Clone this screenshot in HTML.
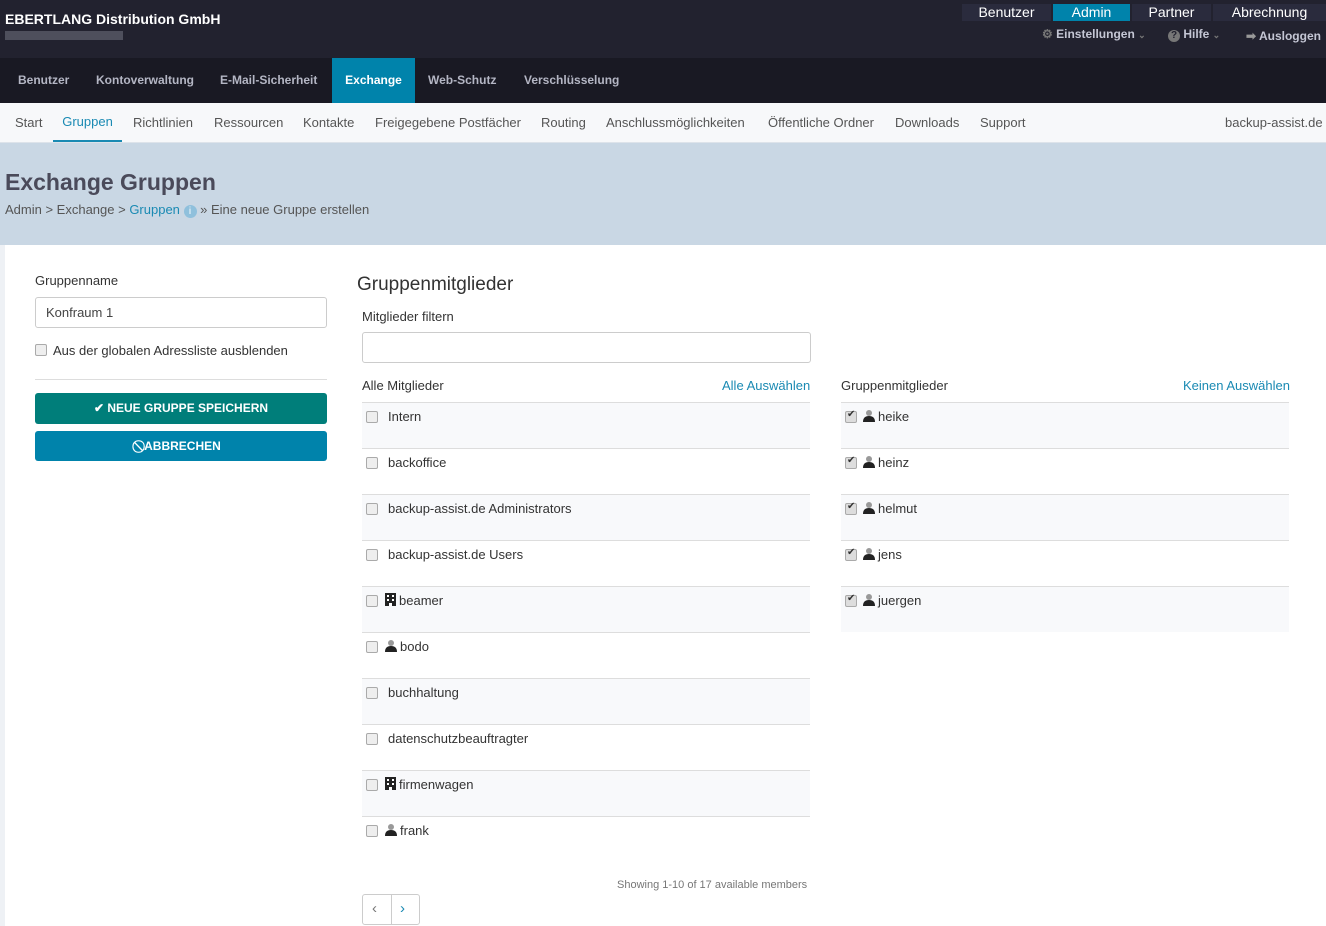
<!DOCTYPE html><html><head><meta charset="utf-8"><style>
*{box-sizing:border-box;margin:0;padding:0}
body{width:1326px;height:926px;overflow:hidden;font-family:"Liberation Sans",sans-serif;font-size:13px;color:#333;background:#eef1f5;position:relative}
.abs{position:absolute}
#top{left:0;top:0;width:1326px;height:58px;background:#22222f}
#nav{left:0;top:58px;width:1326px;height:45px;background:#191923}
#nav span{position:absolute;top:0;height:45px;line-height:45px;color:#b4b6c4;font-weight:bold;font-size:12px}
#sub{left:0;top:103px;width:1326px;height:40px;background:#f7f8fa;border-bottom:1px solid #dde3ea}
#sub span{position:absolute;top:0;line-height:40px;color:#555;font-size:13px}
#ban{left:0;top:143px;width:1326px;height:102px;background:#c9d7e4}
#card{left:5px;top:245px;width:1321px;height:681px;background:#fff}
.tb{position:absolute;top:4px;height:17px;background:#2a2b3d;color:#fff;font-size:14px;text-align:center;line-height:17px}
.cb{position:absolute;width:12px;height:12px;border:1px solid #aaa;border-radius:2px;background:#eee}
.row{position:absolute;height:46px;border-top:1px solid #ddd}
.row.g{background:#f8f9fb}
.row .cb{left:4px;top:8px}
.row .t{position:absolute;top:6px;left:26px;font-size:13px;color:#333}
.ic{display:inline-block;vertical-align:-1px;margin-right:3px}
.chk .cb::after{content:"✔";position:absolute;left:1px;top:-3px;font-size:10px;color:#333}
</style></head><body>
<div id="top" class="abs">
 <div class="abs" style="left:5px;top:11px;color:#fff;font-weight:bold;font-size:14px">EBERTLANG Distribution GmbH</div>
 <div class="abs" style="left:5px;top:31px;width:118px;height:9px;background:#5a5b68;opacity:.8"></div>
 <div class="tb" style="left:962px;width:89px">Benutzer</div>
 <div class="tb" style="left:1053px;width:77px;background:#0083ab">Admin</div>
 <div class="tb" style="left:1132px;width:79px">Partner</div>
 <div class="tb" style="left:1213px;width:113px">Abrechnung</div>
 <div class="abs" style="left:1042px;top:27px;color:#c4c6d4;font-weight:bold;font-size:12px;white-space:nowrap"><span style="color:#777">⚙</span> Einstellungen <span style="color:#777;font-size:9px">⌄</span></div>
 <div class="abs" style="left:1168px;top:27px;color:#c4c6d4;font-weight:bold;font-size:12px;white-space:nowrap"><span style="display:inline-block;width:12px;height:12px;border-radius:6px;background:#777;color:#22222f;font-size:10px;text-align:center;line-height:12px">?</span> Hilfe <span style="color:#777;font-size:9px">⌄</span></div>
 <div class="abs" style="left:1246px;top:29px;color:#c4c6d4;font-weight:bold;font-size:12px;white-space:nowrap"><span style="color:#999">➡</span> Ausloggen</div>
</div>
<div id="nav" class="abs">
 <span style="left:18px">Benutzer</span><span style="left:96px">Kontoverwaltung</span><span style="left:220px">E-Mail-Sicherheit</span>
 <span style="left:332px;width:83px;background:#0083ab;color:#fff;text-align:center">Exchange</span>
 <span style="left:428px">Web-Schutz</span><span style="left:524px">Verschlüsselung</span>
</div>
<div id="sub" class="abs">
 <span style="left:15px">Start</span><span style="left:53px;width:69px;text-align:center;color:#1a8ab3;border-bottom:2px solid #1a8ab3;height:39px;line-height:38px">Gruppen</span>
 <span style="left:133px">Richtlinien</span><span style="left:214px">Ressourcen</span><span style="left:303px">Kontakte</span><span style="left:375px">Freigegebene Postfächer</span><span style="left:541px">Routing</span><span style="left:606px">Anschlussmöglichkeiten</span><span style="left:768px">Öffentliche Ordner</span><span style="left:895px">Downloads</span><span style="left:980px">Support</span><span style="left:1225px">backup-assist.de</span>
</div>
<div id="ban" class="abs">
 <div class="abs" style="left:5px;top:26px;font-size:23px;font-weight:bold;color:#4a4a5a">Exchange Gruppen</div>
 <div class="abs" style="left:5px;top:59px;font-size:13px;color:#555;white-space:nowrap">Admin &gt; Exchange &gt; <span style="color:#1a8ab3">Gruppen</span> <span style="display:inline-block;width:13px;height:13px;border-radius:7px;background:#8fc0dc;color:#fff;font-size:10px;text-align:center;line-height:13px">i</span> » Eine neue Gruppe erstellen</div>
</div>
<div id="card" class="abs">
 <div class="abs" style="left:30px;top:28px;font-size:13px">Gruppenname</div>
 <div class="abs" style="left:30px;top:52px;width:292px;height:31px;border:1px solid #ccc;border-radius:3px;padding:7px 10px;font-size:13px;color:#444">Konfraum 1</div>
 <div class="cb" style="left:30px;top:99px"></div>
 <div class="abs" style="left:48px;top:98px;font-size:13px">Aus der globalen Adressliste ausblenden</div>
 <div class="abs" style="left:30px;top:134px;width:292px;border-top:1px solid #ddd"></div>
 <div class="abs" style="left:30px;top:148px;width:292px;height:31px;background:#007e7a;border-radius:3px;color:#fff;font-weight:bold;font-size:12px;text-align:center;line-height:31px">✔ NEUE GRUPPE SPEICHERN</div>
 <div class="abs" style="left:30px;top:186px;width:292px;height:30px;background:#0083ab;border-radius:3px;color:#fff;font-weight:bold;font-size:12px;text-align:center;line-height:30px">⃠ ABBRECHEN</div>
 <div class="abs" style="left:352px;top:29px;font-size:19px;color:#333">Gruppenmitglieder</div>
 <div class="abs" style="left:357px;top:64px;font-size:13px">Mitglieder filtern</div>
 <div class="abs" style="left:357px;top:87px;width:449px;height:31px;border:1px solid #ccc;border-radius:3px"></div>
 <div class="abs" style="left:357px;top:133px">Alle Mitglieder</div>
 <div class="abs" style="left:717px;top:133px;color:#1a8ab3">Alle Auswählen</div>
 <div class="abs" style="left:836px;top:133px">Gruppenmitglieder</div>
 <div class="abs" style="left:1178px;top:133px;color:#1a8ab3">Keinen Auswählen</div>
</div>
<div class="abs" style="left:362px;top:402px;width:448px">
 <div class="row g" style="top:0;width:448px"><div class="cb"></div><div class="t">Intern</div></div>
 <div class="row" style="top:46px;width:448px"><div class="cb"></div><div class="t">backoffice</div></div>
 <div class="row g" style="top:92px;width:448px"><div class="cb"></div><div class="t">backup-assist.de Administrators</div></div>
 <div class="row" style="top:138px;width:448px"><div class="cb"></div><div class="t">backup-assist.de Users</div></div>
 <div class="row g" style="top:184px;width:448px"><div class="cb"></div><div class="t" style="left:23px"><svg class="ic" width="11" height="13"><rect x="0" y="0" width="11" height="13" fill="#222"/><rect x="2" y="2" width="2" height="2" fill="#fff"/><rect x="7" y="2" width="2" height="2" fill="#fff"/><rect x="2" y="6" width="2" height="2" fill="#fff"/><rect x="7" y="6" width="2" height="2" fill="#fff"/><rect x="4" y="10" width="3" height="3" fill="#fff"/></svg>beamer</div></div>
 <div class="row" style="top:230px;width:448px"><div class="cb"></div><div class="t" style="left:23px"><svg class="ic" width="12" height="12"><circle cx="6" cy="3" r="3" fill="#999"/><path d="M0 12 Q0 6 6 6 Q12 6 12 12Z" fill="#222"/></svg>bodo</div></div>
 <div class="row g" style="top:276px;width:448px"><div class="cb"></div><div class="t">buchhaltung</div></div>
 <div class="row" style="top:322px;width:448px"><div class="cb"></div><div class="t">datenschutzbeauftragter</div></div>
 <div class="row g" style="top:368px;width:448px"><div class="cb"></div><div class="t" style="left:23px"><svg class="ic" width="11" height="13"><rect x="0" y="0" width="11" height="13" fill="#222"/><rect x="2" y="2" width="2" height="2" fill="#fff"/><rect x="7" y="2" width="2" height="2" fill="#fff"/><rect x="2" y="6" width="2" height="2" fill="#fff"/><rect x="7" y="6" width="2" height="2" fill="#fff"/><rect x="4" y="10" width="3" height="3" fill="#fff"/></svg>firmenwagen</div></div>
 <div class="row" style="top:414px;width:448px"><div class="cb"></div><div class="t" style="left:23px"><svg class="ic" width="12" height="12"><circle cx="6" cy="3" r="3" fill="#999"/><path d="M0 12 Q0 6 6 6 Q12 6 12 12Z" fill="#222"/></svg>frank</div></div>
</div>
<div class="abs" style="left:617px;top:879px;font-size:11px;color:#777">Showing 1-10 of 17 available members</div>
<div class="abs" style="left:362px;top:894px;width:58px;height:31px;border:1px solid #ccc;border-radius:3px;background:#fff">
 <div class="abs" style="left:28px;top:0;height:29px;border-left:1px solid #ccc"></div>
 <div class="abs" style="left:9px;top:5px;color:#777;font-size:15px">‹</div>
 <div class="abs" style="left:37px;top:5px;color:#1a8ab3;font-size:15px">›</div>
</div>
<div class="abs chk" style="left:841px;top:402px;width:448px">
 <div class="row g" style="top:0;width:448px"><div class="cb" style="background:#ddd"></div><div class="t" style="left:22px"><svg class="ic" width="12" height="12"><circle cx="6" cy="3" r="3" fill="#999"/><path d="M0 12 Q0 6 6 6 Q12 6 12 12Z" fill="#222"/></svg>heike</div></div>
 <div class="row" style="top:46px;width:448px"><div class="cb" style="background:#ddd"></div><div class="t" style="left:22px"><svg class="ic" width="12" height="12"><circle cx="6" cy="3" r="3" fill="#999"/><path d="M0 12 Q0 6 6 6 Q12 6 12 12Z" fill="#222"/></svg>heinz</div></div>
 <div class="row g" style="top:92px;width:448px"><div class="cb" style="background:#ddd"></div><div class="t" style="left:22px"><svg class="ic" width="12" height="12"><circle cx="6" cy="3" r="3" fill="#999"/><path d="M0 12 Q0 6 6 6 Q12 6 12 12Z" fill="#222"/></svg>helmut</div></div>
 <div class="row" style="top:138px;width:448px"><div class="cb" style="background:#ddd"></div><div class="t" style="left:22px"><svg class="ic" width="12" height="12"><circle cx="6" cy="3" r="3" fill="#999"/><path d="M0 12 Q0 6 6 6 Q12 6 12 12Z" fill="#222"/></svg>jens</div></div>
 <div class="row g" style="top:184px;width:448px"><div class="cb" style="background:#ddd"></div><div class="t" style="left:22px"><svg class="ic" width="12" height="12"><circle cx="6" cy="3" r="3" fill="#999"/><path d="M0 12 Q0 6 6 6 Q12 6 12 12Z" fill="#222"/></svg>juergen</div></div>
</div>
</body></html>
